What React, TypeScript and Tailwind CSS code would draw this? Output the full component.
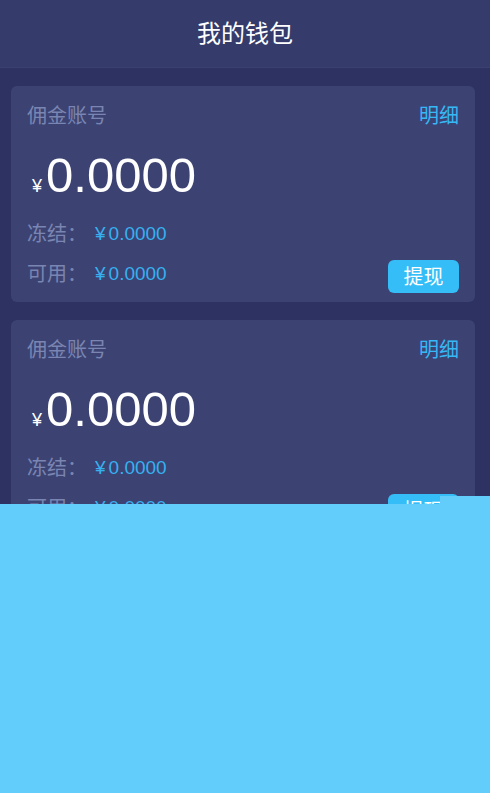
import React from 'react';

const font = { fontFamily: '"Liberation Sans", "Noto Sans CJK SC", sans-serif' };

const Money: React.FC = () => (
  <span className="text-[19px] text-[#36b0ef]">
    <span className="mr-[3px]">¥</span>0.0000
  </span>
);

const WalletCard: React.FC<{ title: string }> = ({ title }) => (
  <div className="rounded-md bg-[#3c4373] px-4 pt-4 pb-[9px]">
    <div className="flex h-7 items-center justify-between text-[20px]">
      <span className="text-[#7a85b1]">{title}</span>
      <span className="text-[#36b8f5]">明细</span>
    </div>
    <div className="mt-[21px] flex h-[48px] items-baseline leading-none text-white">
      <span className="ml-[5px] mr-[4px] text-[18px]">¥</span>
      <span className="text-[49px]">0.0000</span>
    </div>
    <div className="mt-[21px] flex h-7 items-center text-[20px]">
      <span className="w-[68px] text-[#7a85b1]">冻结：</span>
      <Money />
    </div>
    <div className="mt-3 flex items-start justify-between">
      <div className="flex h-7 items-center text-[20px]">
        <span className="w-[68px] text-[#7a85b1]">可用：</span>
        <Money />
      </div>
      <button className="h-[33px] w-[71px] rounded-md bg-[#35bdf7] text-[20px] text-white">提现</button>
    </div>
  </div>
);

export default function App() {
  return (
    <div style={font} className="relative h-[793px] overflow-hidden bg-[#2e3262]">
      <header className="flex h-[68px] items-center justify-center border-b border-[#3b4272] bg-[#353b6b] text-[24px] text-white">
        我的钱包
      </header>
      <main className="flex flex-col gap-[18px] pt-[18px] pl-[11px] pr-[15px]">
        <WalletCard title="佣金账号" />
        <WalletCard title="佣金账号" />
      </main>
      <div className="absolute inset-x-0 top-[504px] bottom-0 bg-[#62cdfb]" />
      <div className="absolute left-[440px] right-0 top-[496px] h-2 bg-[#62cdfb]" />
    </div>
  );
}
